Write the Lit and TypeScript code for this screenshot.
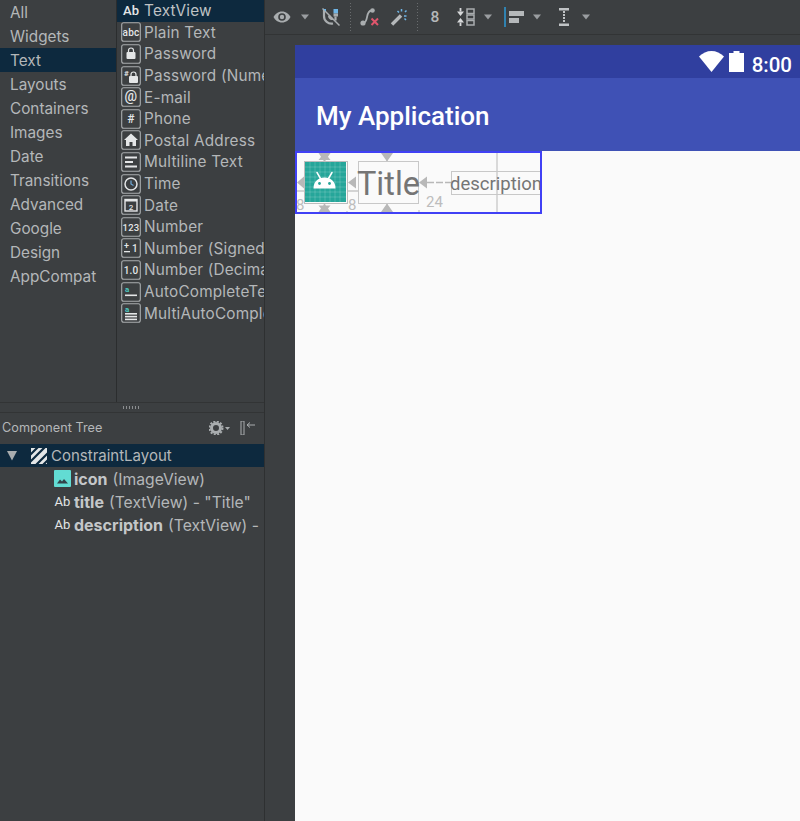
import { LitElement, html, css, svg } from 'lit';
import { customElement } from 'lit/decorators.js';

const categories = ['All', 'Widgets', 'Text', 'Layouts', 'Containers', 'Images', 'Date', 'Transitions', 'Advanced', 'Google', 'Design', 'AppCompat'];

const box = (inner: unknown) => html`<svg class="pal-icon" width="20" height="20" viewBox="0 0 20 20">
  <rect x="0.7" y="0.7" width="18.6" height="18.6" rx="2" fill="none" stroke="#a9adaf" stroke-width="1.1"/>${inner}</svg>`;

const glyph = (t: string, size: number) => svg`<text x="10" y="14" text-anchor="middle" font-family="Roboto, sans-serif" font-weight="500" font-size="${size}" fill="#e4e6e7">${t}</text>`;

const lock = (x: number, y: number) => svg`<path d="M${x + 2} ${y + 4}v-1.5a2.5 2.5 0 0 1 5 0V${y + 4}" fill="none" stroke="#e4e6e7" stroke-width="1.2"/><rect x="${x}" y="${y + 4}" width="9" height="7" rx="1" fill="#e4e6e7"/>`;

const lines = (...rows: number[][]) => rows.map(([x, y, w, h]) => svg`<rect x="${x}" y="${y}" width="${w}" height="${h}" fill="#e4e6e7"/>`);

const items: [string, unknown][] = [
  ['Plain Text', box(glyph('abc', 10))],
  ['Password', box(lock(5.5, 4))],
  ['Password (Numeric)', box(svg`<text x="3" y="10" font-family="Roboto, sans-serif" font-size="8" font-weight="700" fill="#e4e6e7">#</text>${lock(8, 6)}`)],
  ['E-mail', box(glyph('@', 14))],
  ['Phone', box(glyph('#', 12))],
  ['Postal Address', box(svg`<path d="M10 3.5 3 10h2v6h3.5v-4h3v4H15v-6h2z" fill="#e4e6e7"/>`)],
  ['Multiline Text', box(lines([4, 4.5, 12, 2], [4, 9, 8, 2], [4, 13.5, 12, 2]))],
  ['Time', box(svg`<circle cx="10" cy="10" r="6" fill="none" stroke="#e4e6e7" stroke-width="1.5"/><path d="M10 6.5V10l2.5 1.5" fill="none" stroke="#6fa8d8" stroke-width="1.2"/>`)],
  ['Date', box(svg`<rect x="4" y="4.5" width="12" height="11.5" fill="none" stroke="#e4e6e7" stroke-width="1.4"/><rect x="4" y="4" width="12" height="2.5" fill="#e4e6e7"/><text x="10" y="14.5" text-anchor="middle" font-family="Roboto, sans-serif" font-size="8" font-weight="500" fill="#e4e6e7">2</text>`)],
  ['Number', box(glyph('123', 9.5))],
  ['Number (Signed)', box(svg`<text x="3" y="11" font-family="Roboto, sans-serif" font-size="9" font-weight="500" fill="#e4e6e7">+</text>${lines([3, 13, 6, 1.3])}<text x="11" y="14" font-family="Roboto, sans-serif" font-size="10" font-weight="500" fill="#e4e6e7">1</text>`)],
  ['Number (Decimal)', box(glyph('1.0', 10))],
  ['AutoCompleteTextView', box(svg`<text x="4" y="10" font-family="Roboto, sans-serif" font-size="8" font-weight="700" fill="#4ec9c0">a</text>${lines([4, 12.5, 12, 1.6])}`)],
  ['MultiAutoCompleteTextView', box(svg`<text x="4" y="8.5" font-family="Roboto, sans-serif" font-size="8" font-weight="700" fill="#4ec9c0">a</text>${lines([4, 10, 12, 1.6], [4, 12.8, 12, 1.6], [4, 15.6, 12, 1.6])}`)],
];

const caret = html`<svg width="10" height="6" viewBox="0 0 10 6"><path d="M1 0.5h8L5 5.5z" fill="#9a9da0"/></svg>`;
const sep = html`<svg width="1" height="28" viewBox="0 0 1 28"><path d="M.5 0v28" stroke="#696c6e" stroke-dasharray="1 2"/></svg>`;

// [gap before, cell width, content]
const tools: [number, number, unknown][] = [
  [6, 22, html`<svg width="18" height="12" viewBox="0 0 18 12"><path d="M9 .5C5 .5 2 3 .5 6 2 9 5 11.500 9 11.500S16 9 17.500 6C16 3 13 .5 9 .5z" fill="#a9adaf"/><circle cx="9" cy="6" r="3.800" fill="#3c3f41"/><circle cx="9" cy="6" r="2.200" fill="#a9adaf"/></svg>`],
  [6, 12, caret],
  [9, 22, html`<svg width="18" height="18" viewBox="0 0 18 18">
    <path d="M2 2v6a7.500 7.500 0 0 0 9 7.500M7 7.500a4 4 0 0 0 4 3.500M13.500 8.500v4" fill="none" stroke="#a9adaf" stroke-width="2.200"/>
    <path d="M0.500 0.500 17.500 17.500" stroke="#a9adaf" stroke-width="1.500"/>
    <rect x="11.500" y="1" width="4.500" height="4.500" fill="#6fb5e6"/>
    <rect x="11.500" y="5.500" width="4.500" height="3" fill="#a9adaf"/>
    <path d="M1 1h3v2.500z" fill="#6fb5e6"/>
  </svg>`],
  [8, 1, sep],
  [7, 22, html`<svg width="20" height="18" viewBox="0 0 20 18"><path d="M4 15c6 0 2-12 8.500-12.500" fill="none" stroke="#a9adaf" stroke-width="1.800"/><circle cx="4" cy="15" r="2.600" fill="#a9adaf"/><circle cx="13.500" cy="2.500" r="2.300" fill="#a9adaf"/><path d="M12.500 10.500l6.500 6.500M19 10.500 12.500 17" stroke="#e0556c" stroke-width="2"/></svg>`],
  [8, 22, html`<svg width="18" height="18" viewBox="0 0 18 18"><path d="M2 16.500 11 7.500" stroke="#b5b8ba" stroke-width="3.400"/><path d="M11 5.500l2 2" stroke="#3c3f41" stroke-width="1"/><path d="M11.500 1v2.500M16.500 8H14M7.500 3l1.500 1.500M16.500 2.500 15 4M16 12l-1.500-1.500" stroke="#6fb5e6" stroke-width="1.500"/></svg>`],
  [7, 1, sep],
  [9, 16, html`<span class="tool-num">8</span>`],
  [12, 21, html`<svg width="18" height="18" viewBox="0 0 18 18">
    <path d="M3.500 0v3.500M3.500 14.500V18" stroke="#d6d8d9" stroke-width="1.800"/>
    <path d="M0 3.500h7L3.500 8zM0 14.500h7L3.500 10z" fill="#d6d8d9"/>
    <rect x="10" y="1" width="7" height="4.500" fill="none" stroke="#a9adaf" stroke-width="1.500"/>
    <rect x="10" y="7" width="7" height="4" fill="none" stroke="#a9adaf" stroke-width="1.500"/>
    <rect x="10" y="12.500" width="7" height="4.500" fill="none" stroke="#a9adaf" stroke-width="1.500"/>
  </svg>`],
  [6, 12, caret],
  [10, 22, html`<svg width="22" height="20" viewBox="0 0 22 20"><path d="M1 0v20" stroke="#2c9ad6" stroke-width="1.500"/><rect x="5" y="4" width="15" height="5" fill="#b5b8ba"/><rect x="5" y="11" width="10" height="5" fill="#b5b8ba"/></svg>`],
  [5, 12, caret],
  [12, 18, html`<svg width="10" height="18" viewBox="0 0 10 18"><path d="M0 1.200h10M0 16.800h10" stroke="#c0c3c5" stroke-width="2.400"/><path d="M5 3v12" stroke="#c0c3c5" stroke-width="2" stroke-dasharray="2 1"/></svg>`],
  [7, 12, caret],
];

@customElement('app-root')
export class AppRoot extends LitElement {
  static styles = css`
    :host {
      display: block;
      width: 800px;
      height: 821px;
      overflow: hidden;
      background: #3c3f41;
      font-family: Inter, Roboto, sans-serif;
      color: #b4b7b9;
    }
    .ide { display: flex; height: 821px; }
    .side {
      width: 264px;
      flex: none;
      display: flex;
      flex-direction: column;
      border-right: 1px solid #2e3031;
    }
    .palette { display: flex; height: 402px; flex: none; }
    .cats { width: 116px; flex: none; border-right: 1px solid #2b2d2e; }
    .cat {
      height: 24px;
      line-height: 25px;
      padding-left: 10px;
      font-size: 15.300px;
    }
    .cat.on, .item.on, .tree-row.on { background: #0d293e; }
    .items { flex: 1; min-width: 0; overflow: hidden; }
    .item {
      height: 21.6px;
      display: flex;
      align-items: center;
      gap: 3px;
      padding-left: 4px;
      font-size: 15.300px;
      letter-spacing: 0.2px;
      white-space: nowrap;
    }
    .item.on { color: #bfc2c4; }
    .ab {
      width: 20px;
      text-align: center;
      flex: none;
      font: 500 13px Roboto, sans-serif;
      color: #e4e6e7;
      letter-spacing: 0;
    }
    .pal-icon { flex: none; display: block; }
    .grip {
      height: 9px;
      border-top: 1px solid #323435;
      border-bottom: 1px solid #323435;
      display: flex;
      align-items: center;
      justify-content: center;
      flex: none;
    }
    .grip span { width: 18px; height: 3px; background: repeating-linear-gradient(90deg, #8b8e90 0 1px, transparent 1px 3px); }
    .tree-head {
      height: 31px;
      box-sizing: border-box;
      display: flex;
      align-items: center;
      justify-content: space-between;
      padding: 0 9px 2px 2px;
      font-size: 12.700px;
      flex: none;
    }
    .head-icons { display: flex; align-items: center; gap: 9px; }
    .tree-row {
      height: 23px;
      display: flex;
      align-items: center;
      white-space: nowrap;
      overflow: hidden;
      font-size: 15.700px;
      flex: none;
    }
    .root { padding-left: 6px; font-size: 15px; }
    .root svg { flex: none; }
    .root .tri { margin-right: 11px; }
    .root .hatch { margin-right: 4px; }
    .child { padding-left: 54px; gap: 3px; }
    .child .ab { width: 17px; font-weight: 400; }
    .child b { color: #c4c7c9; font-weight: 700; font-size: 16px; margin-right: 5px; }
    .main { flex: 1; min-width: 0; display: flex; flex-direction: column; }
    .toolbar {
      height: 35px;
      box-sizing: border-box;
      padding-bottom: 1px;
      flex: none;
      display: flex;
      align-items: center;
      border-bottom: 1px solid #323435;
    }
    .tool { display: flex; align-items: center; justify-content: center; flex: none; }
    .tool-num { font: 500 15.500px Roboto, sans-serif; color: #b4b7b9; }
    .stage { flex: 1; padding: 10px 0 0 30px; }
    .device { height: 776px; background: #fafafa; display: flex; flex-direction: column; }
    .status {
      height: 33px;
      flex: none;
      background: #303f9f;
      display: flex;
      align-items: center;
      justify-content: flex-end;
      padding-right: 8px;
      color: #fff;
      font: 500 20.500px Roboto, sans-serif;
    }
    .status svg { display: block; }
    .status .wifi { margin-right: 5px; }
    .status .batt { margin-right: 8px; }
    .clock { padding-top: 6px; }
    .appbar {
      height: 73px;
      box-sizing: border-box;
      padding: 2px 0 0 21px;
      flex: none;
      background: #3f51b5;
      color: #fff;
      font: 500 26px Roboto, sans-serif;
      display: flex;
      align-items: center;
    }
    .content { flex: 1; position: relative; }
    .blue {
      position: absolute;
      left: 0;
      top: 0;
      width: 247px;
      height: 63px;
      box-sizing: border-box;
      border: 2px solid #4040f5;
    }
    .links { position: absolute; left: 0; top: 0; }
    .android {
      position: absolute;
      left: 9px;
      top: 10px;
      width: 44px;
      height: 43px;
      box-sizing: border-box;
      border: 1.500px solid #bdbdbd;
    }
    .android svg { display: block; }
    .tv {
      position: absolute;
      box-sizing: border-box;
      border: 1.500px solid #c8c8c8;
      color: #757575;
      font-family: Roboto, sans-serif;
      display: flex;
      align-items: center;
      justify-content: center;
      white-space: nowrap;
    }
    .title { left: 63px; top: 10px; width: 61px; height: 43px; padding-top: 3px; font-size: 32.500px; }
    .desc { left: 156px; top: 20px; width: 90px; height: 24px; padding-top: 2px; font-size: 18.500px; }
    .num { position: absolute; font: 15px Roboto, sans-serif; color: #bdbdbd; }
    .n1 { left: 1px; top: 45px; }
    .n2 { left: 53px; top: 45px; }
    .n3 { left: 131px; top: 42px; }
  `;

  render() {
    return html`
      <div class="ide">
        <div class="side">
          <div class="palette">
            <div class="cats">
              ${categories.map((c) => html`<div class="cat ${c === 'Text' ? 'on' : ''}">${c}</div>`)}
            </div>
            <div class="items">
              <div class="item on"><span class="ab">Ab</span>TextView</div>
              ${items.map(([name, icon]) => html`<div class="item">${icon}${name}</div>`)}
            </div>
          </div>
          <div class="grip"><span></span></div>
          <div class="tree-head">
            <span>Component Tree</span>
            <span class="head-icons">
              <svg width="22" height="14" viewBox="0 0 22 14">
                <circle cx="7" cy="7" r="4.500" fill="none" stroke="#a9adaf" stroke-width="3"/>
                <circle cx="7" cy="7" r="6.500" fill="none" stroke="#a9adaf" stroke-width="2" stroke-dasharray="2 1.400"/>
                <path d="M16 6h5l-2.500 3z" fill="#a9adaf"/>
              </svg>
              <svg width="15" height="14" viewBox="0 0 15 14">
                <rect x="1" y="0" width="3" height="14" fill="none" stroke="#a9adaf" stroke-width="1"/>
                <path d="M15 4H7M10 1.500 7 4l3 2.500" fill="none" stroke="#a9adaf" stroke-width="1"/>
              </svg>
            </span>
          </div>
          <div class="tree-row root on">
            <svg class="tri" width="14" height="10" viewBox="0 0 14 10"><path d="M1 0h10L6 9.500z" fill="#a9adaf"/></svg>
            <svg class="hatch" width="16" height="16" viewBox="0 0 16 16">
              <rect width="16" height="16" fill="#e4e6e7"/>
              <path d="M-2 8 8-2M-2 15 15-2M4 18 18 4M11 18l7-7" stroke="#0d293e" stroke-width="2.200"/>
            </svg>
            ConstraintLayout
          </div>
          <div class="tree-row child">
            <svg width="17" height="17" viewBox="0 0 17 17">
              <rect width="17" height="17" rx="1" fill="#62dcd3"/>
              <path d="M3 13.500l3-4 2 2 2-2.500 4 4.500z" fill="#31444a"/>
            </svg>
            <span><b>icon</b>(ImageView)</span>
          </div>
          <div class="tree-row child"><span class="ab">Ab</span><span><b>title</b>(TextView) - "Title"</span></div>
          <div class="tree-row child"><span class="ab">Ab</span><span><b>description</b>(TextView) -</span></div>
        </div>
        <div class="main">
          <div class="toolbar">
            ${tools.map(([gap, w, t]) => html`<span class="tool" style="margin-left:${gap}px;width:${w}px">${t}</span>`)}
          </div>
          <div class="stage">
            <div class="device">
              <div class="status">
                <svg class="wifi" width="25" height="21" viewBox="0 0 25 21"><path d="M0 5.500C3.500 2 8 0 12.500 0S21.500 2 25 5.500L12.500 21z" fill="#fff"/></svg>
                <svg class="batt" width="15" height="21" viewBox="0 0 15 21"><path d="M4.500 0h6v2H15v19H0V2h4.500z" fill="#fff"/></svg>
                <span class="clock">8:00</span>
              </div>
              <div class="appbar">My Application</div>
              <div class="content">
                <svg class="links" width="247" height="63" viewBox="0 0 247 63">
                  <path d="M202 0v63M0 40h9M53 40h10M92 0v10M92 53v10M29.500 0v10M29.500 53v10M52 60v3M124 59v4" fill="none" stroke="#c8c8c8" stroke-width="1.300"/>
                  <path d="M23.500 2h12L29.500 11zM23.500 9l6-7.500 6 7.500zM23.500 61h12L29.500 52.500zM23.500 54.500l6 7 6-7z" fill="#b8b8b8"/>
                  <path d="M86 2h12L92 10.500zM86 61h12L92 52.500z" fill="#b8b8b8"/>
                  <path d="M9 25.500v12L2 31.500zM61 25.500v12L53 31.500zM132 25.500v12L124 31.500z" fill="#b8b8b8"/>
                  <path d="M132 31.500h24" stroke="#b8b8b8" stroke-width="1.500" stroke-dasharray="7 2"/>
                </svg>
                <div class="android">
                  <svg width="41" height="40" viewBox="0 0 41 40">
                    <rect width="41" height="40" fill="#26a69a"/>
                    <path d="M5 0v40M10 0v40M15 0v40M20 0v40M25 0v40M30 0v40M35 0v40M0 5h41M0 10h41M0 15h41M0 20h41M0 25h41M0 30h41M0 35h41" stroke="#fff" stroke-opacity=".22" stroke-width=".8"/>
                    <path d="M8.500 26.500c0-7 4.500-11 11-11s11 4 11 11z" fill="#fff"/>
                    <path d="M12 10.500l3.500 6M27 10.500l-3.500 6" stroke="#fff" stroke-width="1.500" stroke-linecap="round"/>
                    <circle cx="14.500" cy="21.500" r="1.400" fill="#26a69a"/><circle cx="24.500" cy="21.500" r="1.400" fill="#26a69a"/>
                  </svg>
                </div>
                <div class="tv title">Title</div>
                <div class="tv desc">description</div>
                <span class="num n1">8</span>
                <span class="num n2">8</span>
                <span class="num n3">24</span>
                <div class="blue"></div>
              </div>
            </div>
          </div>
        </div>
      </div>
    `;
  }
}
